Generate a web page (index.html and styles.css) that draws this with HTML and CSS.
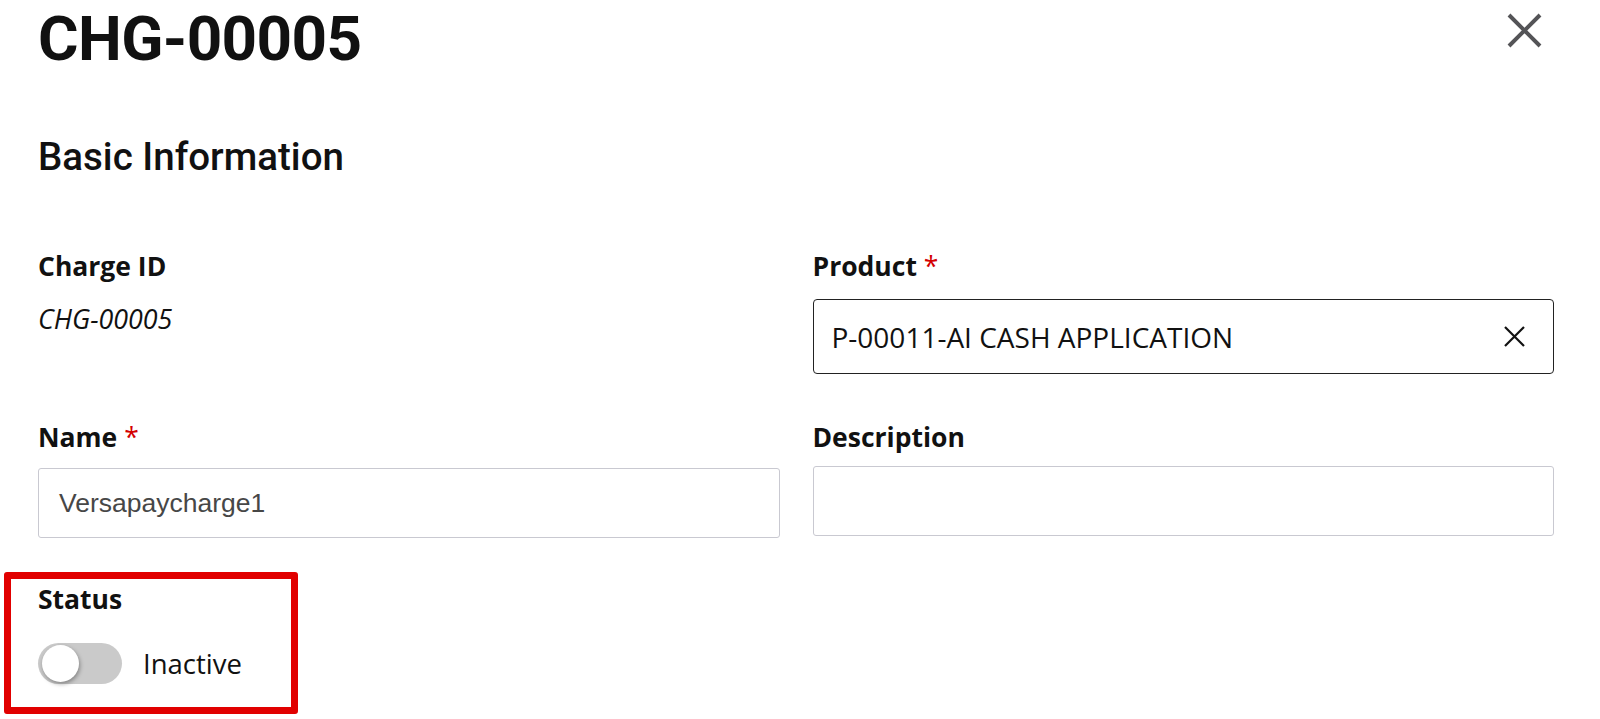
FILE: index.html
```html
<!DOCTYPE html>
<html lang="en">
<head>
<meta charset="utf-8">
<title>CHG-00005</title>
<link rel="stylesheet" href="styles.css">
</head>
<body>
<div class="page">
  <header class="header">
    <h1 class="title">CHG-00005</h1>
    <button class="close" aria-label="Close">
      <svg width="35" height="35" viewBox="0 0 35 35"><path d="M2 2 L33 33 M33 2 L2 33" stroke="#545457" stroke-width="4" fill="none"/></svg>
    </button>
  </header>
  <h2 class="section">Basic Information</h2>
  <div class="grid">
    <div class="field">
      <div class="label">Charge ID</div>
      <div class="static">CHG-00005</div>
    </div>
    <div class="field">
      <div class="label">Product <span class="req">*</span></div>
      <div class="select">
        <span class="select-value">P-00011-AI CASH APPLICATION</span>
        <svg class="clear" width="23" height="21" viewBox="0 0 23 21"><path d="M2 1 L21 20 M21 1 L2 20" stroke="#111" stroke-width="2.2" fill="none"/></svg>
      </div>
    </div>
    <div class="field row2">
      <div class="label">Name <span class="req">*</span></div>
      <div class="input">Versapaycharge1</div>
    </div>
    <div class="field row2">
      <div class="label">Description</div>
      <div class="input desc"></div>
    </div>
    <div class="field status">
      <div class="label">Status</div>
      <div class="toggle-row">
        <span class="track"><span class="knob"></span></span>
        <span class="toggle-text">Inactive</span>
      </div>
    </div>
  </div>
</div>
</body>
</html>
```
FILE: styles.css
```css
* { box-sizing: border-box; }
html, body { margin: 0; padding: 0; background: #fff; }
body { font-family: "Open Sans", "Noto Sans", sans-serif; color: #111; min-height: 100vh; }
.page { padding: 8px 46px 0 38px; }
.header { display: flex; justify-content: space-between; align-items: flex-start; }
.title { margin: 0; font-family: Roboto, sans-serif; font-weight: 700; font-size: 62px; line-height: 62px; color: #111; letter-spacing: -0.6px; }
.close { border: 0; background: none; padding: 0; margin: 5px 12px 0 0; width: 35px; height: 35px; display: block; }
.close svg { display: block; }
.section { margin: 68px 0 0; font-family: Roboto, sans-serif; font-weight: 500; font-size: 38.5px; line-height: 38px; color: #111; }
.grid { display: grid; grid-template-columns: 1fr 1fr; column-gap: 33px; margin-top: 73px; }
.field { display: flex; flex-direction: column; }
.label { font-weight: 700; font-size: 26.5px; line-height: 34px; color: #111; }
.req { color: #d40000; font-weight: 400; }
.static { font-style: italic; font-size: 26.8px; line-height: 34px; margin-top: 19px; color: #111; }
.select { margin-top: 16px; height: 75px; border: 1.5px solid #222; border-radius: 4px; display: flex; align-items: center; justify-content: space-between; padding: 0 27px 0 18px; }
.select-value { font-size: 28px; color: #111; }
.clear { display: block; }
.row2 { margin-top: 46px; }
.input { margin-top: 14px; height: 70px; border: 1.5px solid #c9c9d1; border-radius: 3px; display: flex; align-items: center; padding: 0 20px; font-family: "Liberation Sans", Arial, sans-serif; font-size: 26.5px; color: #474747; }
.desc { margin-top: 12px; }
.status { margin-top: 34px; margin-left: -34px; width: 294px; justify-self: start; border: 7px solid #e10000; border-radius: 3px; padding: 3px 0 23px 27px; }
.toggle-row { display: flex; align-items: center; margin-top: 27px; height: 41px; }
.track { position: relative; width: 84px; height: 41px; border-radius: 21px; background: #cacaca; display: block; }
.knob { position: absolute; left: 4px; top: 2px; width: 37px; height: 37px; border-radius: 50%; background: #fff; box-shadow: 1px 2px 4px rgba(0,0,0,0.35); }
.toggle-text { margin-left: 21px; font-size: 27.5px; color: #111; }
```
